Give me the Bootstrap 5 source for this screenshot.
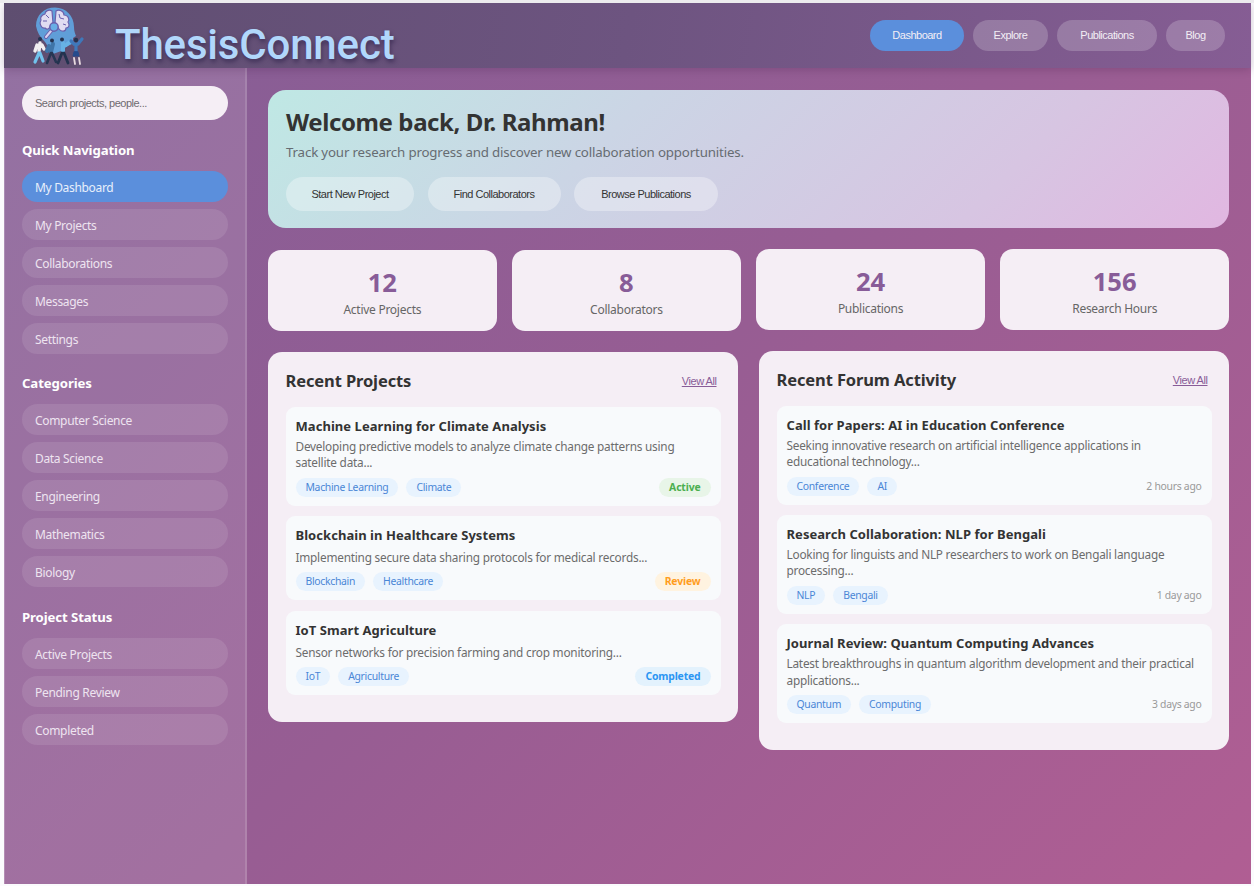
<!DOCTYPE html>
<html lang="en">
<head>
<meta charset="utf-8">
<title>ThesisConnect</title>
<link href="https://cdn.jsdelivr.net/npm/bootstrap@5.3.0/dist/css/bootstrap.min.css" rel="stylesheet">
<style>
html,body{height:886px;overflow:hidden}
body{background:#fbfbfd;border-top:3px solid #ecebee;padding:0 3px 2px 4px;font-family:"Noto Sans","Open Sans",sans-serif;color:#333;font-size:12px}
.app-shell{height:881px;background:linear-gradient(135deg,#845e96 0%,#975d93 50%,#b05e93 100%)}
.topbar{height:65px;flex:none;background:linear-gradient(100deg,#5e4e70,#6d5480 50%,#865d94);box-shadow:0 2px 8px rgba(60,20,60,.22);padding:0 26px 0 27px;position:relative}
.logo-art{margin-top:3px}
.brand-name{font:500 42px/50px Roboto,sans-serif;color:#b1d7fb;text-shadow:1px 3px 4px rgba(30,20,60,.5);letter-spacing:-.18px;margin:17px 0 0 29px}
.top-links{gap:9px;margin-top:16.5px}
.btn-pill{font-family:"Liberation Sans",Arial,sans-serif;border:0;border-radius:50rem;padding:0;height:31px;font-size:11px;line-height:31px;color:#f3eef5;background:rgba(255,255,255,.2);text-align:center;letter-spacing:-.5px}
.btn-pill.active{background:#5b8fdc}
.side{width:243px;flex:none;background:rgba(255,255,255,.12);border-left:1px solid rgba(255,255,255,.2);border-right:2px solid rgba(255,255,255,.13);padding:18px 17px 0}
.search-box{height:34px;border:0;border-radius:17px;background:#f5eef5;padding:0 13px;margin-bottom:20px;font:11px "Liberation Sans",Arial,sans-serif;letter-spacing:-.5px}
.search-box::placeholder{color:#6f6b70;opacity:1}
.side h6{font-size:13.2px;font-weight:700;line-height:20px;color:#fff;margin:0 0 11px;letter-spacing:-.1px}
.side-link{height:31px;line-height:33px;border-radius:16px;background:rgba(255,255,255,.1);color:#eee4f0;padding-left:13px;margin-bottom:7px;font-size:12px;letter-spacing:-.32px;display:block;text-decoration:none}
.side-link.active{background:#5b8fdc;color:#e8effb}
.side-group{margin-bottom:19.3px}
.content{padding:22px 22px 0 21px;min-width:0}
.hero{height:138px;border-radius:18px;background:linear-gradient(135deg,#bfe8e4 0%,#cbd5e5 35%,#d7c5e2 75%,#e1b7e1 100%);padding:16px 18px}
.hero h1{font-size:24px;font-weight:700;line-height:31px;margin:0;letter-spacing:-.4px}
.hero p{font-size:13.3px;line-height:20px;color:#666c72;margin:5px 0 15px;letter-spacing:-.165px}
.hero .btn-pill{height:34px;line-height:35px;background:rgba(255,255,255,.33);color:#333}
.hero-actions{gap:13.5px}
.stats-row{gap:15.5px;margin-top:22px}
.stat{height:81px;border-radius:13px;background:#f5eef5;text-align:center;padding-top:16px}
.stat b{display:block;font-size:25.6px;line-height:34px;color:#885c98}
.stat span{font-size:12px;line-height:20px;color:#666;display:block;letter-spacing:-.27px}
.raised{margin-top:-1px}
.panels-row{gap:21px;margin-top:21px}
.panel{flex:1 1 0;min-width:0;border-radius:14px;background:#f5eef5;padding:17px 17.5px 16.5px}
.panel-head{margin-bottom:14px}
.panel h2{font-size:16.5px;font-weight:700;line-height:24px;margin:0;letter-spacing:-.12px}
.view-all{font:11px/18px "Liberation Sans",Arial,sans-serif;letter-spacing:-.45px;color:#885c98;padding-right:4px}
.entry{background:#f8fafc;border-radius:9px;padding:9px 10px;margin-bottom:10.6px}
.entry h3{font-size:13px;font-weight:700;line-height:20px;margin:0 0 2px;white-space:nowrap;letter-spacing:.05px}
.entry p{font-size:11.8px;line-height:16.3px;color:#6c6c6c;margin:0 0 7px;white-space:nowrap;letter-spacing:-.22px}
.entry.one p{margin:4px 0 7px}
.chip{font-size:10.4px;line-height:19px;height:19px;border-radius:10px;padding:0 10px;background:#e8f3fe;color:#4a86d6;margin-right:8px;display:inline-block;letter-spacing:-.3px}
.state{font-size:10.4px;line-height:19px;height:19px;border-radius:10px;padding:0 10px;font-weight:700;letter-spacing:-.15px}
.state.running{background:#e8f5e8;color:#4caf50}
.state.review{background:#fff3e0;color:#ff9d1e}
.state.done{background:#e3f2fd;color:#2b96f3}
.ago{font-size:10.4px;color:#999;line-height:19px;letter-spacing:-.28px}
.w59{width:59px}.w75{width:75px}.w94{width:94px}.w-pub{width:100px}.w128{width:128px}.w133{width:133px}.w144{width:144px}
</style>
</head>
<body>
<div class="app-shell d-flex flex-column">
<header class="topbar d-flex align-items-start">
<svg class="logo-art" width="55" height="60" viewBox="0 0 55 60">
<path d="M5 20C5 9 13 1.500 24 1.500S43 10 43 21c0 4 1 6 2 9l-3 2v5c-3 3-7 2-9 7l-11 4c-5-2-4-7-8-12-5-5-8-10-9-16z" fill="#609ed8"/>
<path d="M21 5c-3-2-7 0-7 3-4 1-5 4-4 6-2 3 0 9 4 8 2 2 4 1 5-1l3-4zM25 5c3-2 8 0 8 4 4 0 6 4 4 7 2 3 1 6-2 6 0 4-5 4-7 1l-4-6z" fill="#e0dcf1" stroke="#6b61ad" stroke-width="1.200"/>
<path d="M15 9l3 3M12 15h4M28 8l1 4 4 1M32 18l3 1" fill="none" stroke="#6b61ad" stroke-width="1"/>
<path d="M20 25l-5 6" stroke="#6b61ad" stroke-width="4" stroke-linecap="round"/>
<path d="M20 25l-5 6" stroke="#d8d2ef" stroke-width="2" stroke-linecap="round"/>
<circle cx="23" cy="21" r="4.200" fill="#69aee5" stroke="#6b61ad" stroke-width="1.500"/>
<g stroke-linecap="round" fill="none">
<path d="M9 37l-1 8M6 39l-2 6M11 39l2 4" stroke="#f1eef0" stroke-width="3.400"/>
<path d="M8 47l-4 9M9 47l3 8" stroke="#71c2ec" stroke-width="3.200"/>
<path d="M22 38l-2 8M18 40l-2 5" stroke="#3f74a8" stroke-width="4"/>
<path d="M20 47l-4 10M21 47l4 9" stroke="#263653" stroke-width="2.600"/>
<path d="M32 37v9M35 39l4-3" stroke="#67b1e4" stroke-width="4"/>
<path d="M31 47l-4 10M33 47l4 10" stroke="#23334f" stroke-width="2.800"/>
<path d="M45 38v7M47 38l4-5M43 38l-3-3" stroke="#3f78ba" stroke-width="3.200"/>
<path d="M43 46l-1 4h6l-1-4z" fill="#274b8c" stroke="#274b8c"/>
<path d="M43 52l1 6M48 52l1 6" stroke="#e8dbe0" stroke-width="1.800"/>
</g>
<g fill="#25324f"><circle cx="9" cy="33" r="2"/><circle cx="21" cy="34.500" r="2"/><circle cx="31" cy="33.500" r="2"/><circle cx="45" cy="34" r="2.200"/></g>
</svg>
<div class="brand-name">ThesisConnect</div>
<nav class="top-links d-flex ms-auto">
<button class="btn-pill active w94">Dashboard</button>
<button class="btn-pill w75">Explore</button>
<button class="btn-pill w-pub">Publications</button>
<button class="btn-pill w59">Blog</button>
</nav>
</header>
<div class="d-flex flex-grow-1">
<aside class="side">
<input class="search-box w-100 d-block" placeholder="Search projects, people...">
<div class="side-group"><h6>Quick Navigation</h6>
<a class="side-link active">My Dashboard</a><a class="side-link">My Projects</a><a class="side-link">Collaborations</a><a class="side-link">Messages</a><a class="side-link">Settings</a></div>
<div class="side-group"><h6>Categories</h6>
<a class="side-link">Computer Science</a><a class="side-link">Data Science</a><a class="side-link">Engineering</a><a class="side-link">Mathematics</a><a class="side-link">Biology</a></div>
<div class="side-group"><h6>Project Status</h6>
<a class="side-link">Active Projects</a><a class="side-link">Pending Review</a><a class="side-link">Completed</a></div>
</aside>
<main class="content flex-grow-1">
<section class="hero">
<h1>Welcome back, Dr. Rahman!</h1>
<p>Track your research progress and discover new collaboration opportunities.</p>
<div class="hero-actions d-flex">
<button class="btn-pill w128">Start New Project</button>
<button class="btn-pill w133">Find Collaborators</button>
<button class="btn-pill w144">Browse Publications</button>
</div>
</section>
<section class="stats-row d-flex">
<div class="stat flex-fill w-25"><b>12</b><span>Active Projects</span></div>
<div class="stat flex-fill w-25"><b>8</b><span>Collaborators</span></div>
<div class="stat raised flex-fill w-25"><b>24</b><span>Publications</span></div>
<div class="stat raised flex-fill w-25"><b>156</b><span>Research Hours</span></div>
</section>
<section class="panels-row d-flex align-items-start">
<div class="panel">
<div class="panel-head d-flex justify-content-between align-items-center"><h2>Recent Projects</h2><a class="view-all" href="#">View All</a></div>
<div class="entry"><h3>Machine Learning for Climate Analysis</h3><p>Developing predictive models to analyze climate change patterns using<br>satellite data...</p>
<div class="d-flex"><span class="chip">Machine Learning</span><span class="chip">Climate</span><span class="state running ms-auto">Active</span></div></div>
<div class="entry one"><h3>Blockchain in Healthcare Systems</h3><p>Implementing secure data sharing protocols for medical records...</p>
<div class="d-flex"><span class="chip">Blockchain</span><span class="chip">Healthcare</span><span class="state review ms-auto">Review</span></div></div>
<div class="entry one"><h3>IoT Smart Agriculture</h3><p>Sensor networks for precision farming and crop monitoring...</p>
<div class="d-flex"><span class="chip">IoT</span><span class="chip">Agriculture</span><span class="state done ms-auto">Completed</span></div></div>
</div>
<div class="panel raised">
<div class="panel-head d-flex justify-content-between align-items-center"><h2>Recent Forum Activity</h2><a class="view-all" href="#">View All</a></div>
<div class="entry"><h3>Call for Papers: AI in Education Conference</h3><p>Seeking innovative research on artificial intelligence applications in<br>educational technology...</p>
<div class="d-flex"><span class="chip">Conference</span><span class="chip">AI</span><span class="ago ms-auto">2 hours ago</span></div></div>
<div class="entry"><h3>Research Collaboration: NLP for Bengali</h3><p>Looking for linguists and NLP researchers to work on Bengali language<br>processing...</p>
<div class="d-flex"><span class="chip">NLP</span><span class="chip">Bengali</span><span class="ago ms-auto">1 day ago</span></div></div>
<div class="entry"><h3>Journal Review: Quantum Computing Advances</h3><p>Latest breakthroughs in quantum algorithm development and their practical<br>applications...</p>
<div class="d-flex"><span class="chip">Quantum</span><span class="chip">Computing</span><span class="ago ms-auto">3 days ago</span></div></div>
</div>
</section>
</main>
</div>
</div>
<script src="https://cdn.jsdelivr.net/npm/bootstrap@5.3.0/dist/js/bootstrap.bundle.min.js"></script>
</body>
</html>
